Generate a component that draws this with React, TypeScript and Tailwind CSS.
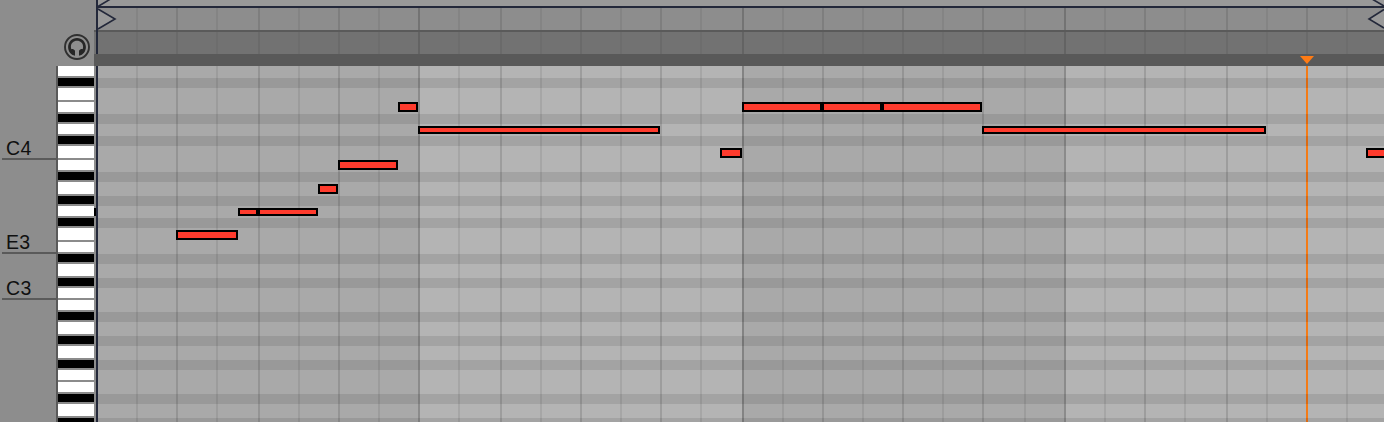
const BLACK_ROWS = [78, 114, 136, 172, 196, 218, 254, 278, 312, 336, 360, 394, 418];
const WHITE_KEYS = [
  [66, 10], [88, 12], [102, 10], [124, 10], [146, 12], [160, 10], [182, 12], [206, 10], [228, 12], [242, 10],
  [264, 12], [288, 10], [300, 10], [322, 12], [346, 12], [370, 10], [382, 10], [404, 12],
];
const LINES = [
  136, 176, 216, 258, 298, 338, 378, 418, 458, 500, 540, 580, 620, 660, 700, 742, 782, 822, 862, 902, 942, 982, 1024,
  1064, 1104, 1144, 1184, 1226, 1266, 1306, 1346,
];
const NOTES = [
  [176, 230, 62, 10], [238, 208, 20, 8], [256, 208, 62, 8], [318, 184, 20, 10], [338, 160, 60, 10],
  [398, 102, 20, 10], [418, 126, 242, 8], [720, 148, 22, 10], [742, 102, 80, 10], [820, 102, 62, 10],
  [880, 102, 102, 10], [982, 126, 284, 8], [1366, 148, 30, 10],
];
const SPLITS = [[258, 208, 8], [822, 102, 10], [882, 102, 10]];
const LABELS: [string, number][] = [["C4", 158], ["E3", 252], ["C3", 298]];

function lineTone(i: number) {
  if (i % 8 === 7) return "#000000";
  return i % 2 === 1 ? "#0000008c" : "#00000055";
}

function GridLines({ top, height, strength }: { top: number; height: number; strength: number }) {
  return (
    <g opacity={strength}>
      {LINES.map((x, i) => (
        <rect key={x} x={x - 98} y={top} width={2} height={height} fill={lineTone(i)} />
      ))}
    </g>
  );
}

function Headphones() {
  return (
    <svg className="ml-[63px] mt-[33px] block" width="28" height="28" viewBox="0 0 28 28" fill="none">
      <circle cx="14" cy="14" r="12" stroke="#303030" strokeWidth="1.9" />
      <path
        d="M12 22.8V17.8C11 16.2 9.6 15.9 8.3 16.2C8 15.3 7.9 14.5 7.9 13.6C7.9 10.2 10.5 7.7 14 7.7S20.1 10.2 20.1 13.6C20.1 14.5 20 15.3 19.7 16.2C18.4 15.9 17 16.2 16 17.8V22.8C20.2 21.9 22.9 18.4 22.9 14C22.9 8.9 19 5 14 5S5.1 8.9 5.1 14C5.1 18.4 7.8 21.9 12 22.8Z"
        fill="#262626"
      />
    </svg>
  );
}

function Keyboard() {
  return (
    <div className="relative h-[356px] w-[38px] overflow-hidden border-l-2 border-[#5a5a5a] bg-[#8b8b8b]">
      {WHITE_KEYS.map(([y, h]) => (
        <div key={y} className="absolute left-0 w-[36px] bg-white" style={{ top: y - 66, height: h }} />
      ))}
      {BLACK_ROWS.map((y) => (
        <div key={y} className="absolute left-0 h-2 w-[36px] bg-black" style={{ top: y - 66 }} />
      ))}
    </div>
  );
}

function Sidebar() {
  return (
    <aside className="flex w-[94px] shrink-0 flex-col">
      <div className="h-[66px] shrink-0 overflow-hidden">
        <Headphones />
      </div>
      <div className="flex">
        <div className="relative h-[356px] w-[56px]">
          {LABELS.map(([name, y]) => (
            <div
              key={name}
              className="absolute left-0.5 h-[22px] w-[54px] border-b-2 border-[#5a5a5a] pl-1 text-[19.5px] leading-[20px] tracking-[0.3px] text-[#101010]"
              style={{ top: y - 86 }}
            >
              {name}
            </div>
          ))}
        </div>
        <Keyboard />
      </div>
    </aside>
  );
}

function Ruler() {
  return (
    <svg className="block shrink-0" width="1290" height="66" viewBox="94 0 1290 66">
      <rect x="98" y="0" width="1286" height="6" fill="#999999" />
      <rect x="94" y="0" width="4" height="30" fill="#8d8d8d" />
      <rect x="98" y="8" width="1286" height="22" fill="#8d8d8d" />
      <rect x="94" y="30" width="1290" height="24" fill="#727272" />
      <g transform="translate(98 0)">
        <GridLines top={8} height={22} strength={0.18} />
        <GridLines top={32} height={22} strength={0.12} />
      </g>
      <rect x="94" y="30" width="1290" height="2" fill="#5a5a5a" />
      <path d="M98 9L115 19L98 29Z" fill="#999999" />
      <path d="M1384 9L1369 19L1384 28Z" fill="#999999" />
      <path
        d="M98 6.5L110.5 -1M98 9L115 19L98 29M1372 -1L1384 6M1384 9.5L1369 19L1384 28"
        stroke="#23283a"
        strokeWidth="1.6"
        fill="none"
      />
      <rect x="96" y="6" width="1288" height="2" fill="#23283a" />
      <rect x="96" y="0" width="2" height="54" fill="#23283a" />
      <rect x="94" y="54" width="1290" height="12" fill="#595959" />
      <path d="M1300 56H1314L1307 64Z" fill="#ff7b14" />
    </svg>
  );
}

function NoteGrid() {
  return (
    <div className="relative ml-0.5 h-[356px] w-[1288px] overflow-hidden border-l-2 border-[#23283a]">
      <div className="flex h-full">
        <div className="w-[320px] bg-[#a9a9a9]" />
        <div className="w-[324px] bg-[#b4b4b4]" />
        <div className="w-[322px] bg-[#a9a9a9]" />
        <div className="w-[320px] bg-[#b4b4b4]" />
      </div>
      {BLACK_ROWS.map((y) => (
        <div key={y} className="absolute left-0 h-2.5 w-full bg-black/9" style={{ top: y - 66 }} />
      ))}
      <svg className="absolute left-0 top-0" width="1286" height="356">
        <GridLines top={0} height={356} strength={0.22} />
      </svg>
      {NOTES.map(([x, y, w, h]) => (
        <div
          key={x}
          className="absolute border-2 border-black bg-[#ff3b2d]"
          style={{ left: x - 98, top: y - 66, width: w, height: h }}
        />
      ))}
      {SPLITS.map(([x, y, h]) => (
        <div key={x} className="absolute w-1 bg-black" style={{ left: x - 100, top: y - 66, height: h }} />
      ))}
      <div className="absolute left-[1208px] top-0 h-full w-0.5 bg-[#f47b16]" />
      {BLACK_ROWS.map((y) => (
        <div key={y} className="absolute left-[1208px] h-2.5 w-0.5 bg-[#db6a12]" style={{ top: y - 66 }} />
      ))}
    </div>
  );
}

export default function App() {
  return (
    <main className="flex h-[422px] w-[1384px] overflow-hidden bg-[#8d8d8d] font-['Liberation_Sans',sans-serif]">
      <Sidebar />
      <section className="relative flex w-[1290px] flex-col">
        <Ruler />
        <NoteGrid />
        <div className="absolute left-0 top-[208px] h-2 w-0.5 bg-black" />
      </section>
    </main>
  );
}
